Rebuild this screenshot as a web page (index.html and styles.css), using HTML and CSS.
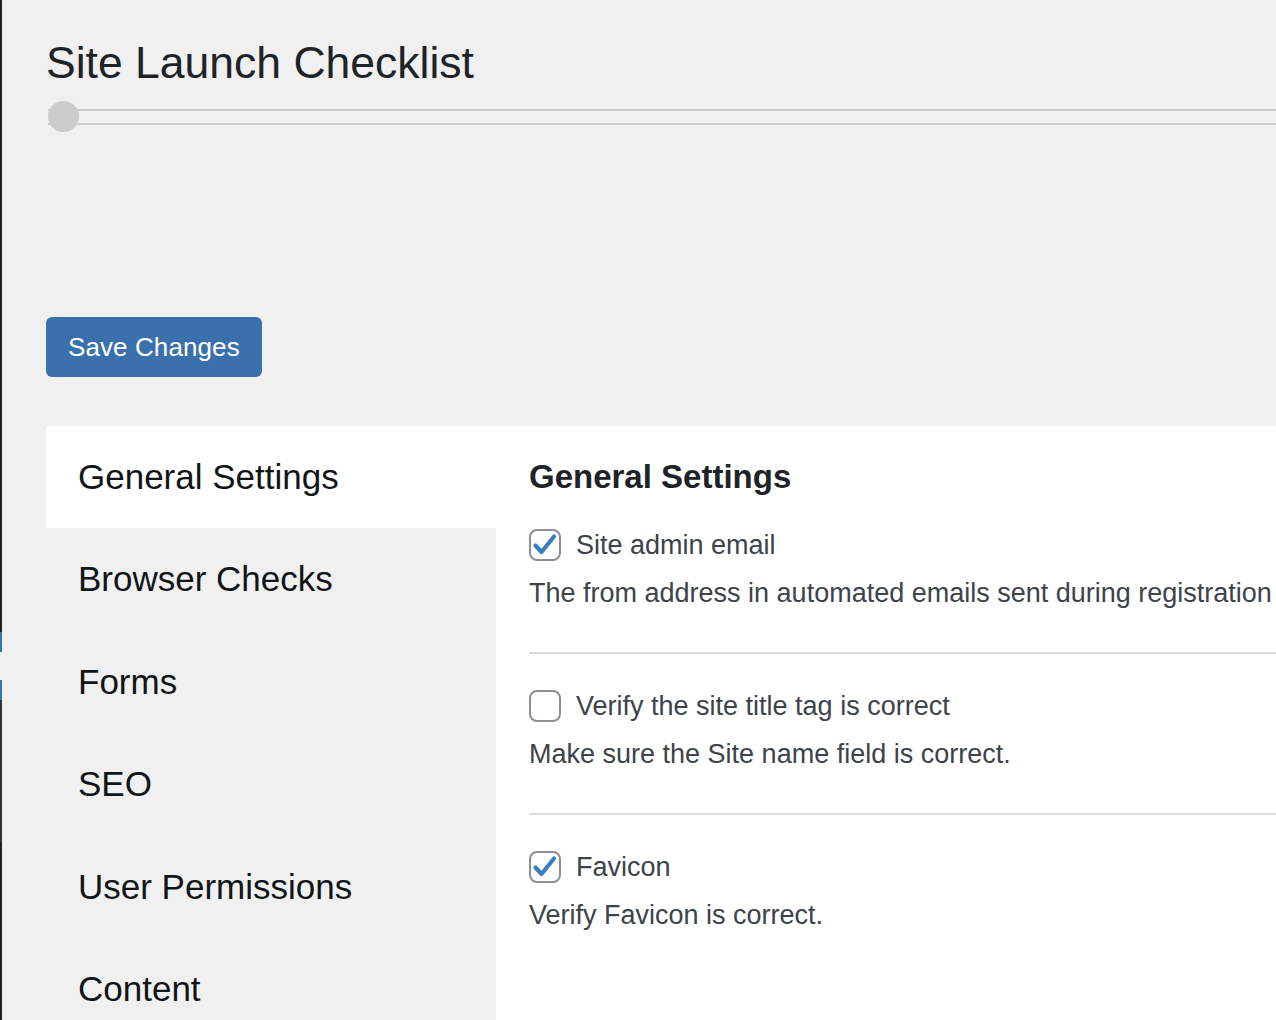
FILE: index.html
```html
<!DOCTYPE html>
<html lang="en">
<head>
<meta charset="utf-8">
<title>Site Launch Checklist</title>
<link rel="stylesheet" href="styles.css">
</head>
<body>
  <div class="menu-edge" aria-hidden="true">
    <span class="seg seg-dark-top"></span>
    <span class="seg seg-blue"></span>
    <span class="seg seg-gap"></span>
    <span class="seg seg-blue"></span>
    <span class="seg seg-mid"></span>
    <span class="seg seg-dark-bottom"></span>
  </div>

  <div class="wrap">
    <h1 class="page-title">Site Launch Checklist</h1>

    <div class="progress">
      <div class="progress-track"></div>
      <span class="progress-knob"></span>
    </div>

    <div class="actions">
      <button class="button-primary" type="button">Save Changes</button>
    </div>

    <div class="settings">
      <nav class="tabs">
        <div class="tab active">General Settings</div>
        <div class="tab">Browser Checks</div>
        <div class="tab">Forms</div>
        <div class="tab">SEO</div>
        <div class="tab">User Permissions</div>
        <div class="tab">Content</div>
      </nav>

      <section class="panel">
        <h2 class="panel-title">General Settings</h2>

        <div class="item first">
          <div class="check-row">
            <span class="checkbox">
              <svg viewBox="0 0 32 32" width="32" height="32"><path d="M6.5 16.5 L12.5 23 L25 7.5" fill="none" stroke="#3a7fc6" stroke-width="4.2" stroke-linecap="round" stroke-linejoin="round"/></svg>
            </span>
            <span class="label">Site admin email</span>
          </div>
          <p class="desc">The from address in automated emails sent during registration</p>
        </div>

        <div class="item">
          <div class="check-row">
            <span class="checkbox"></span>
            <span class="label">Verify the site title tag is correct</span>
          </div>
          <p class="desc">Make sure the Site name field is correct.</p>
        </div>

        <div class="item last">
          <div class="check-row">
            <span class="checkbox">
              <svg viewBox="0 0 32 32" width="32" height="32"><path d="M6.5 16.5 L12.5 23 L25 7.5" fill="none" stroke="#3a7fc6" stroke-width="4.2" stroke-linecap="round" stroke-linejoin="round"/></svg>
            </span>
            <span class="label">Favicon</span>
          </div>
          <p class="desc">Verify Favicon is correct.</p>
        </div>
      </section>
    </div>
  </div>
</body>
</html>
```

FILE: styles.css
```css
html, body {
  margin: 0;
  height: 100%;
  overflow: hidden;
  background: #f0f0f1;
}

body {
  display: flex;
  font-family: "Liberation Sans", Arial, sans-serif;
  color: #1d2327;
}

/* admin menu edge */
.menu-edge {
  width: 2px;
  flex: none;
  display: flex;
  flex-direction: column;
}
.seg { display: block; }
.seg-dark-top { height: 632px; background: #1d2327; }
.seg-blue { height: 20px; background: #3a72ae; }
.seg-gap { height: 28px; background: transparent; }
.seg-mid { height: 142px; background: #2c3338; }
.seg-dark-bottom { flex: 1; background: #1d2327; }

.wrap {
  flex: 1;
  min-width: 0;
  padding-left: 44px;
}

.page-title {
  margin: 0;
  padding-top: 34px;
  font-size: 44.5px;
  line-height: 58px;
  font-weight: 400;
  color: #1d2327;
}

/* progress */
.progress {
  position: relative;
  height: 31px;
  margin-top: 9px;
  padding-top: 8px;
  box-sizing: border-box;
}
.progress-track {
  height: 16px;
  box-sizing: border-box;
  border-top: 2px solid #cccccc;
  border-bottom: 2px solid #cccccc;
  margin-left: 2px;
}
.progress-knob {
  position: absolute;
  left: 2px;
  top: 0;
  width: 31px;
  height: 31px;
  border-radius: 50%;
  background: #cccccc;
}

/* button */
.actions {
  margin-top: 185px;
}
.button-primary {
  height: 60px;
  padding: 0 22px;
  border: none;
  border-radius: 6px;
  background: #3a71ac;
  color: #ffffff;
  font-family: "Liberation Sans", Arial, sans-serif;
  font-size: 26px;
  line-height: 60px;
  letter-spacing: 0.1px;
  cursor: pointer;
}

/* settings */
.settings {
  display: flex;
  margin-top: 49px;
  height: 700px;
}
.tabs {
  width: 450px;
  flex: none;
}
.tab {
  padding: 32px 33px 32px 32px;
  font-size: 35px;
  line-height: 38.4px;
  color: #101517;
  white-space: nowrap;
}
.tab.active {
  background: #ffffff;
}

.panel {
  flex: 1;
  min-width: 0;
  background: #ffffff;
  padding: 31px 0 0 33px;
  white-space: nowrap;
  overflow: hidden;
}
.panel-title {
  margin: 0;
  font-size: 33px;
  line-height: 40px;
  font-weight: 700;
  color: #1d2327;
}

.item {
  padding: 36px 0 41px;
  border-bottom: 2px solid #dcdcde;
}
.item.first {
  padding-top: 32px;
}
.item.last {
  border-bottom: none;
}

.check-row {
  display: flex;
  align-items: center;
  gap: 15px;
  height: 32px;
}
.checkbox {
  width: 32px;
  height: 32px;
  flex: none;
  box-sizing: border-box;
  border: 2px solid #8c8f94;
  border-radius: 8px;
  background: #ffffff;
  display: flex;
  align-items: center;
  justify-content: center;
  overflow: visible;
}
.checkbox svg {
  flex: none;
}
.label {
  font-size: 27px;
  line-height: 32px;
  color: #3c434a;
}
.desc {
  margin: 14px 0 0;
  font-size: 27px;
  line-height: 36px;
  color: #3c434a;
}
```
